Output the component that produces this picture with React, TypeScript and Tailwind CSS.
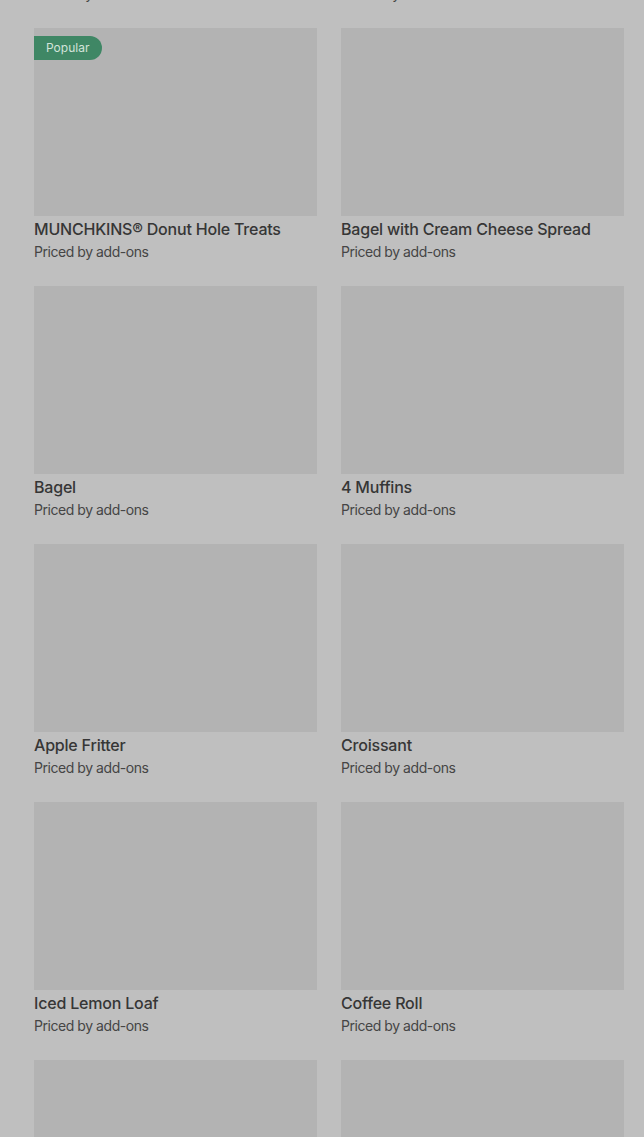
const items: { name: string; popular?: boolean }[] = [
  { name: "Glazed Donut" },
  { name: "Boston Kreme Donut" },
  { name: "MUNCHKINS® Donut Hole Treats", popular: true },
  { name: "Bagel with Cream Cheese Spread" },
  { name: "Bagel" },
  { name: "4 Muffins" },
  { name: "Apple Fritter" },
  { name: "Croissant" },
  { name: "Iced Lemon Loaf" },
  { name: "Coffee Roll" },
  { name: "Blueberry Muffin" },
  { name: "Chocolate Donut" },
];

function ItemCard({ name, popular }: { name: string; popular?: boolean }) {
  return (
    <div className="pb-6">
      <div className="relative h-[188px] bg-[#b3b3b3]">
        {popular && (
          <span className="absolute left-0 top-2 flex h-6 items-center rounded-r-full bg-[#3f8765] pl-3 pr-[13px] text-[12px] leading-none text-[#d3e3da]">
            Popular
          </span>
        )}
      </div>
      <p className="mt-[3px] truncate text-[16px] font-medium leading-5 tracking-[-0.2px] text-[#363636]">{name}</p>
      <p className="mt-[3px] text-[14px] leading-5 tracking-[-0.45px] text-[#454545]">Priced by add-ons</p>
    </div>
  );
}

export default function App() {
  return (
    <div className="h-[1137px] overflow-hidden bg-[#bfbfbf]" style={{ fontFamily: "Inter, 'Noto Sans', sans-serif" }}>
      <div className="-mt-[230px] grid grid-cols-2 gap-x-6 pl-[34px] pr-5">
        {items.map((item) => (
          <ItemCard key={item.name} name={item.name} popular={item.popular} />
        ))}
      </div>
    </div>
  );
}
